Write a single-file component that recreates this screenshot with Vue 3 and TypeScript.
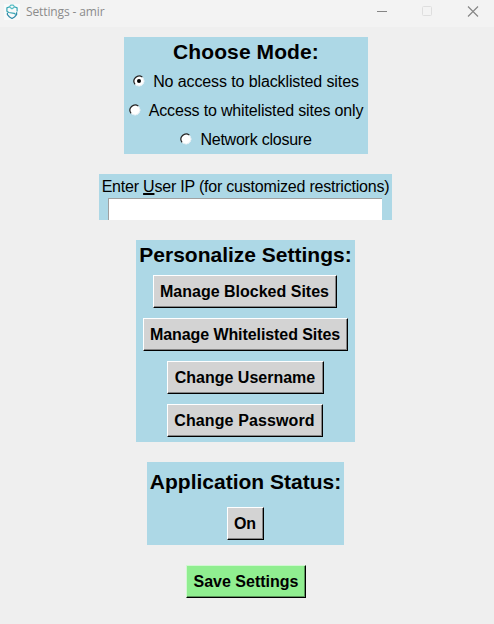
<script setup lang="ts">
import { ref } from 'vue'

interface Mode { id: string; label: string }
interface Action { id: string; label: string }

const modes: Mode[] = [
  { id: 'blacklist', label: 'No access to blacklisted sites' },
  { id: 'whitelist', label: 'Access to whitelisted sites only' },
  { id: 'closure', label: 'Network closure' },
]
const actions: Action[] = [
  { id: 'blocked', label: 'Manage Blocked Sites' },
  { id: 'whitelisted', label: 'Manage Whitelisted Sites' },
  { id: 'username', label: 'Change Username' },
  { id: 'password', label: 'Change Password' },
]
const selected = ref('blacklist')
const userIp = ref('')
const running = ref(true)
</script>

<template>
  <div class="window">
    <header class="titlebar">
      <svg class="logo" width="16" height="16" viewBox="0 0 16 16" fill="none">
        <rect width="16" height="16" fill="#f8fafa" />
        <g stroke-width="1.2" stroke-linejoin="round">
          <path d="M5.400 2.900 6.800 1.200h2.400l1.400 1.700L8 4.800Z" stroke="#55bdc4" />
          <path d="M5 3 2.900 3.900v3.300L4.800 8.500l5.400.8 1.500 1.200M11 3l2.100.9v3.600" stroke="#36a5b3" />
          <path d="M3.400 8.700v2L5.500 13 8 14.400l2.500-1.400 2.100-2.300V8.300" stroke="#318ba9" />
        </g>
      </svg>
      <span class="caption">Settings - amir</span>
      <div class="controls">
        <svg width="12" height="12" viewBox="0 0 12 12"><path d="M1 5.500h10" stroke="#858585" /></svg>
        <svg width="12" height="12" viewBox="0 0 12 12"><rect x="1.500" y=".5" width="9" height="9" rx="1" fill="none" stroke="#dedede" /></svg>
        <svg width="12" height="12" viewBox="0 0 12 12"><path d="m1 .5 10 10M11 .5l-10 10" stroke="#858585" stroke-width="1.100" /></svg>
      </div>
    </header>

    <main class="content">
      <section class="panel mode">
        <h2>Choose Mode:</h2>
        <label v-for="m in modes" :key="m.id" class="option" :class="m.id">
          <input v-model="selected" type="radio" name="mode" :value="m.id" />
          <svg width="12" height="12" viewBox="0 0 12 12" fill="none">
            <circle cx="6" cy="6" r="5.300" fill="#fff" />
            <path d="M2.100 9.400A5.200 5.200 0 0 1 9.400 2.100" stroke="#222" stroke-width="1.200" />
            <path d="M10 3A5 5 0 0 1 3 10" stroke="#dceaf0" stroke-width=".8" />
            <circle v-if="selected === m.id" cx="6" cy="6" r="2" fill="#000" />
          </svg>
          <span>{{ m.label }}</span>
        </label>
      </section>

      <section class="panel address">
        <label for="ip">Enter <span class="mnemonic">U</span>ser IP (for customized restrictions)</label>
        <input id="ip" v-model="userIp" type="text" />
      </section>

      <section class="panel personalize">
        <h2>Personalize Settings:</h2>
        <button v-for="a in actions" :key="a.id" class="btn" :class="a.id"><span>{{ a.label }}</span></button>
      </section>

      <section class="panel status">
        <h2>Application Status:</h2>
        <button class="btn toggle" @click="running = !running"><span>{{ running ? 'On' : 'Off' }}</span></button>
      </section>

      <button class="btn save"><span>Save Settings</span></button>
    </main>
  </div>
</template>

<style>
body { margin: 0; background: #efefef; }
</style>

<style scoped>
.window {
  width: 494px;
  height: 624px;
  overflow: hidden;
  background: #efefef;
  color: #000;
  font: 16px/20px "Liberation Sans", Arial, sans-serif;
}
.titlebar {
  display: flex;
  align-items: center;
  box-sizing: border-box;
  height: 27px;
  padding: 0 15px 4px 4px;
  background: #f3f3f3;
}
.caption {
  margin-left: 6px;
  color: #8b8b8b;
  font: 12px/16px "Open Sans", "Noto Sans", sans-serif;
  letter-spacing: -0.12px;
  white-space: nowrap;
}
.controls { display: flex; gap: 33px; margin-left: auto; }
.controls svg:nth-child(-n+2) { position: relative; left: -1px; }
.content { display: flex; flex-direction: column; align-items: center; padding-top: 10px; }
.panel {
  display: flex;
  flex-direction: column;
  align-items: center;
  box-sizing: border-box;
  margin-bottom: 20px;
  background: #add8e6;
  white-space: nowrap;
}
h2 { margin: 0; font-size: 21px; line-height: 30px; font-weight: bold; }
.mode { width: 244px; height: 117px; margin-right: 2px; }
.mode h2 { letter-spacing: 0.1px; }
.option { display: flex; align-items: center; gap: 8px; height: 29px; }
.option svg { margin-bottom: 1px; }
.option input { position: absolute; opacity: 0; pointer-events: none; }
.blacklist { letter-spacing: -0.11px; }
.whitelist { letter-spacing: -0.16px; }
.closure { letter-spacing: -0.24px; }
.address { width: 293px; height: 46px; margin-right: 3px; padding-top: 2px; }
.address label { height: 22px; line-height: 22px; letter-spacing: -0.21px; }
.mnemonic { text-decoration: underline; text-decoration-thickness: 2px; text-underline-offset: 1px; }
.address input {
  box-sizing: border-box;
  width: 274px;
  height: 22px;
  margin-right: 1px;
  padding: 0 4px;
  border: 0 solid #a0a0a0;
  border-width: 1px 0 0 1px;
  border-radius: 0;
  outline: 0;
  background: #fff;
  font: inherit;
}
.personalize { width: 219px; height: 202px; margin-right: 3px; }
.personalize h2 { margin-bottom: 5px; }
.personalize .btn { margin-bottom: 10px; }
.status { width: 197px; height: 83px; margin-right: 3px; }
.status h2 { height: 45px; line-height: 40px; }
.btn {
  display: flex;
  align-items: center;
  justify-content: center;
  box-sizing: border-box;
  flex: none;
  height: 33px;
  padding: 0;
  border: 1px solid;
  border-color: #fff #000 #000 #fff;
  border-radius: 0;
  background: #d3d3d3;
  box-shadow: inset -1px -1px #858585;
  color: #000;
  font: bold 16px/20px "Liberation Sans", Arial, sans-serif;
  white-space: nowrap;
}
.blocked { width: 184px; margin-right: 1px; padding-right: 1px; }
.whitelisted { width: 205px; letter-spacing: -0.08px; padding-right: 1px; }
.username { width: 157px; padding-right: 1px; }
.password { width: 156px; margin-right: 1px; padding-right: 1px; letter-spacing: 0.12px; }
.toggle { width: 37px; padding-right: 1px; }
.save { width: 120px; margin-right: 2px; background: #90ee90; border-color: #d2f8d2 #000 #000 #d2f8d2; box-shadow: inset -1px -1px #5a955a; }
</style>
